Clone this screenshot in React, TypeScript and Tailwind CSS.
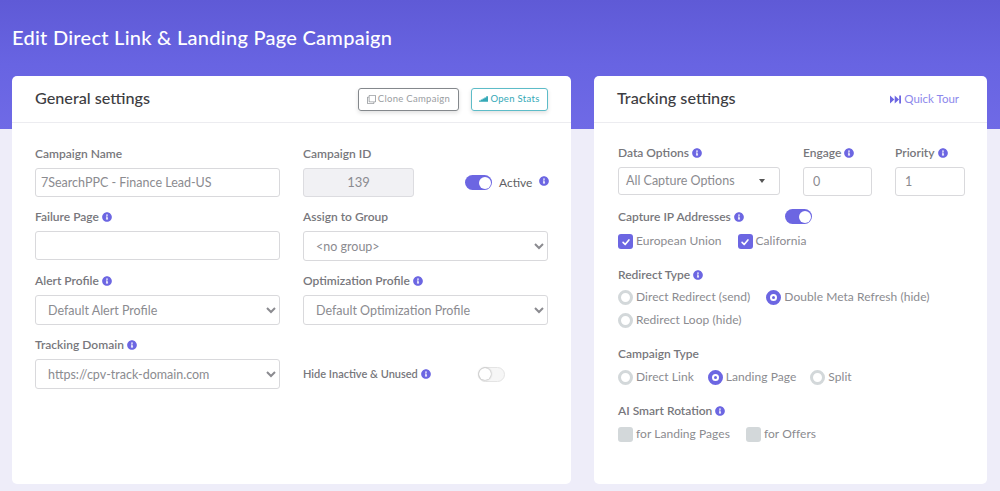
import type { ReactNode } from "react";
import { FaInfoCircle, FaRegClone } from "react-icons/fa";

function Info({ className = "" }: { className?: string }) {
  return <FaInfoCircle className={`inline-block shrink-0 text-[10px] text-[#6c66e2] ${className}`} />;
}

function Label({ children, info = false }: { children: ReactNode; info?: boolean }) {
  return (
    <div className="flex h-[14px] items-center gap-[3px] text-[12px] font-semibold text-[#77777c]">
      <span className="whitespace-nowrap">{children}</span>
      {info && <Info />}
    </div>
  );
}

function Toggle({ on }: { on: boolean }) {
  return on ? (
    <div className="flex h-[15px] w-[27px] items-center justify-end rounded-full bg-[#6c66e2] pr-[1px]">
      <div className="h-[12px] w-[12px] rounded-full bg-white" />
    </div>
  ) : (
    <div className="flex h-[15px] w-[27px] items-center rounded-full border border-[#e4e4e4] bg-[#f6f6f6]">
      <div className="h-[12px] w-[12px] rounded-full bg-white shadow-[0_0_2px_#888]" />
    </div>
  );
}

function Check({ on, children }: { on: boolean; children: ReactNode }) {
  return (
    <div className="flex h-[15px] items-center gap-[3px]">
      {on ? (
        <div className="flex h-[15px] w-[15px] items-center justify-center rounded-[3px] bg-[#6c66e2]">
          <svg viewBox="0 0 12 12" className="h-[10px] w-[10px]" fill="none" stroke="white" strokeWidth="2" strokeLinecap="round" strokeLinejoin="round">
            <path d="M2.5 6.5 5 9l4.5-5.5" />
          </svg>
        </div>
      ) : (
        <div className="h-[15px] w-[15px] rounded-[3px] bg-[#d3d8da]" />
      )}
      <span className="mb-[2px] text-[12px] tracking-[0.05px] text-[#8b8b90]">{children}</span>
    </div>
  );
}

function Radio({ on, children }: { on: boolean; children: ReactNode }) {
  return (
    <div className="flex h-[15px] items-center gap-[3px]">
      {on ? (
        <div className="flex h-[15px] w-[15px] items-center justify-center rounded-full border-[4px] border-[#6c66e2] bg-white">
          <div className="h-[3px] w-[3px] rounded-full bg-[#6c66e2]" />
        </div>
      ) : (
        <div className="h-[15px] w-[15px] rounded-full border-[3px] border-[#d3d8da] bg-white" />
      )}
      <span className="mb-[2px] text-[12px] tracking-[0.05px] text-[#8b8b90]">{children}</span>
    </div>
  );
}

const field = "rounded-[3px] border border-[#d9d9dc] bg-white text-[12.5px] text-[#8b8b90] outline-none";

function Select({ value }: { value: string }) {
  return (
    <select defaultValue={value} className={`${field} h-[30px] w-full pl-[8px] pr-[2px]`}>
      <option>{value}</option>
    </select>
  );
}

function CardHead({ title, children }: { title: string; children: ReactNode }) {
  return (
    <div className="flex h-[47px] items-center justify-between border-b border-[#ececf0] px-[23px]">
      <h2 className="mb-[2px] text-[16.2px] font-medium text-[#3d3d42]">{title}</h2>
      {children}
    </div>
  );
}

export default function App() {
  return (
    <div className="h-[491px] w-[1000px] overflow-hidden bg-[#eeedf9] font-[Lato,sans-serif]">
      <div className="h-[129px] bg-gradient-to-b from-[#5f5ad6] via-[#6864e2] to-[#6f6ae6] px-[12px] pt-[25px]">
        <h1 className="text-[20px] leading-[24px] font-medium tracking-[0.27px] text-white">
          Edit Direct Link &amp; Landing Page Campaign
        </h1>
      </div>

      <div className="mt-[-53px] flex gap-[23px] pl-[12px]">
        <section className="h-[408px] w-[559px] rounded-[5px] bg-white">
          <CardHead title="General settings">
            <div className="flex gap-[12px]">
              <button className="flex h-[23px] w-[101px] items-center justify-center gap-[2px] rounded-[3px] border border-[#84888c] text-[9.5px] tracking-[0.3px] text-[#9a9da1] shadow-[0_2px_4px_rgba(0,0,0,0.12)]">
                <FaRegClone className="text-[9px]" /> Clone Campaign
              </button>
              <button className="flex h-[23px] w-[77px] items-center justify-center gap-[2px] rounded-[3px] border border-[#5dbcc8] text-[9.5px] tracking-[0.3px] text-[#35a9b7] shadow-[0_2px_4px_rgba(0,0,0,0.12)]">
                <svg viewBox="0 0 10 6" className="h-[6px] w-[9px]" fill="currentColor">
                  <path d="M0 6V4.8h2V3.6h2V2.4h2V1.2h2V0h2v6z" />
                </svg>
                Open Stats
              </button>
            </div>
          </CardHead>

          <div className="grid grid-cols-[245px_245px] gap-x-[23px] gap-y-[13px] px-[23px] pt-[24px]">
            <div>
              <Label>Campaign Name</Label>
              <input readOnly value="7SearchPPC - Finance Lead-US" className={`${field} mt-[7px] h-[29px] w-full px-[5px]`} />
            </div>
            <div>
              <Label>Campaign ID</Label>
              <div className="mt-[7px] flex items-center">
                <div className="flex h-[29px] w-[111px] shrink-0 items-center justify-center rounded-[3px] border border-[#dcdce0] bg-[#f1f1f4] text-[13px] text-[#8b8b90]">
                  139
                </div>
                <div className="ml-[51px]">
                  <Toggle on />
                </div>
                <span className="ml-[7px] text-[12px] text-[#5f5f64]">Active</span>
                <Info className="mb-[4px] ml-[7px]" />
              </div>
            </div>

            <div>
              <Label info>Failure Page</Label>
              <input readOnly className={`${field} mt-[7px] h-[29px] w-full px-[5px]`} />
            </div>
            <div>
              <Label>Assign to Group</Label>
              <div className="mt-[7px]">
                <Select value="<no group>" />
              </div>
            </div>

            <div>
              <Label info>Alert Profile</Label>
              <div className="mt-[7px]">
                <Select value="Default Alert Profile" />
              </div>
            </div>
            <div>
              <Label info>Optimization Profile</Label>
              <div className="mt-[7px]">
                <Select value="Default Optimization Profile" />
              </div>
            </div>

            <div>
              <Label info>Tracking Domain</Label>
              <div className="mt-[7px]">
                <Select value="https://cpv-track-domain.com" />
              </div>
            </div>
            <div className="flex items-center pt-[21px]">
              <div className="w-[175px] text-[11px]">
                <div className="flex h-[14px] items-center gap-[3px] font-semibold text-[#77777c]">
                  <span>Hide Inactive &amp; Unused</span>
                  <Info />
                </div>
              </div>
              <Toggle on={false} />
            </div>
          </div>
        </section>

        <section className="h-[408px] w-[393px] rounded-[5px] bg-white">
          <CardHead title="Tracking settings">
            <div className="mr-[5px] flex items-center gap-[3px] text-[11.5px] text-[#8d88ec]">
              <svg viewBox="0 0 14 10" className="h-[9px] w-[11px]" fill="#6c66e2">
                <path d="M0 0 5.5 5 0 10zM6 0l5.5 5L6 10zM11.7 0H14v10h-2.3z" />
              </svg>
              Quick Tour
            </div>
          </CardHead>

          <div className="px-[24px] pt-[23px]">
            <div className="flex">
              <div className="w-[185px] shrink-0">
                <Label info>Data Options</Label>
                <div className={`${field} mt-[7px] flex h-[28px] w-[162px] items-center justify-between pr-[14px] pl-[7px] text-[11.5px]`}>
                  <span>All Capture Options</span>
                  <span className="h-0 w-0 border-x-[3.5px] border-t-[4px] border-x-transparent border-t-[#555]" />
                </div>
              </div>
              <div className="w-[92px] shrink-0">
                <Label info>Engage</Label>
                <input readOnly value="0" className={`${field} mt-[7px] h-[29px] w-[69px] px-[9px]`} />
              </div>
              <div className="w-[70px] shrink-0">
                <Label info>Priority</Label>
                <input readOnly value="1" className={`${field} mt-[7px] h-[29px] w-full px-[9px]`} />
              </div>
            </div>

            <div className="mt-[13px] flex h-[15px] items-center">
              <div className="w-[167px]">
                <Label info>Capture IP Addresses</Label>
              </div>
              <Toggle on />
            </div>
            <div className="mt-[10px] flex gap-[16px]">
              <Check on>European Union</Check>
              <Check on>California</Check>
            </div>

            <div className="mt-[19px]">
              <Label info>Redirect Type</Label>
            </div>
            <div className="mt-[8px] flex gap-[16px]">
              <Radio on={false}>Direct Redirect (send)</Radio>
              <Radio on>Double Meta Refresh (hide)</Radio>
            </div>
            <div className="mt-[8px]">
              <Radio on={false}>Redirect Loop (hide)</Radio>
            </div>

            <div className="mt-[19px]">
              <Label>Campaign Type</Label>
            </div>
            <div className="mt-[9px] flex gap-[14px]">
              <Radio on={false}>Direct Link</Radio>
              <Radio on>Landing Page</Radio>
              <Radio on={false}>Split</Radio>
            </div>

            <div className="mt-[19px]">
              <Label info>AI Smart Rotation</Label>
            </div>
            <div className="mt-[9px] flex gap-[16px]">
              <Check on={false}>for Landing Pages</Check>
              <Check on={false}>for Offers</Check>
            </div>
          </div>
        </section>
      </div>
    </div>
  );
}
